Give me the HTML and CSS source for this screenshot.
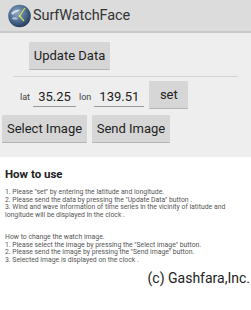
FILE: index.html
```html
<!DOCTYPE html>
<html>
<head>
<meta charset="utf-8">
<link rel="stylesheet" href="styles.css">
</head>
<body>
<div class="app">
  <header class="titlebar">
    <svg class="logo" width="23" height="24" viewBox="0 0 23 24">
      <defs>
        <radialGradient id="g" cx="0.4" cy="0.35" r="0.7">
          <stop offset="0" stop-color="#8fa9c4"/>
          <stop offset="0.55" stop-color="#4d6d92"/>
          <stop offset="1" stop-color="#1f3553"/>
        </radialGradient>
      </defs>
      <circle cx="11.5" cy="12" r="11.3" fill="url(#g)"/>
      <path d="M3 9 C6 6 9 5 12 6 C10 8 7 8 5 11 Z" fill="#dfe8ef" opacity="0.85"/>
      <path d="M4 14 C7 12 9 13 10 15 C8 16 6 16 4 15 Z" fill="#c9d7e3" opacity="0.7"/>
      <line x1="11.5" y1="12" x2="17" y2="4" stroke="#d8e04a" stroke-width="1.2"/>
      <line x1="11.5" y1="12" x2="16" y2="17" stroke="#d8e04a" stroke-width="1.2"/>
      <circle cx="11.5" cy="12" r="1" fill="#e6ec6a"/>
    </svg>
    <span class="title">SurfWatchFace</span>
  </header>

  <main class="controls">
    <div class="row center">
      <button class="btn btn-update">Update Data</button>
    </div>
    <div class="divider"></div>
    <div class="row latlon">
      <span class="label">lat</span>
      <span class="field f-lat">35.25</span>
      <span class="label">lon</span>
      <span class="field f-lon">139.51</span>
      <button class="btn btn-set">set</button>
    </div>
    <div class="row images">
      <button class="btn btn-select">Select Image</button>
      <button class="btn btn-send">Send Image</button>
    </div>
  </main>

  <section class="help">
    <h2 class="help-title">How to use</h2>
    <p class="help-text">1. Please "set" by entering the latitude and longitude.<br>2. Please send the data by pressing the "Update Data" button .<br>3. Wind and wave information of time series in the vicinity of latitude and longitude will be displayed in the clock .</p>
    <p class="help-text gap">How to change the watch image.<br>1. Please select the image by pressing the "Select image" button.<br>2. Please send the image by pressing the "Send image" button.<br>3. Selected image is displayed on the clock .</p>
    <div class="copy">(c) Gashfara,Inc.</div>
  </section>
</div>
</body>
</html>
```

FILE: styles.css
```css
html, body {
  margin: 0;
  padding: 0;
}
body {
  width: 251px;
  height: 310px;
  overflow: hidden;
  background: #eeeeee;
  font-family: Roboto, "Liberation Sans", sans-serif;
  color: #222;
}
.app {
  display: flex;
  flex-direction: column;
  height: 310px;
}
.titlebar {
  height: 31px;
  background: #dcdcdc;
  border-bottom: 2px solid #c9c9c9;
  display: flex;
  align-items: center;
  padding-left: 8px;
  gap: 2px;
  flex-shrink: 0;
}
.logo {
  display: block;
  margin-top: 1px;
}
.title {
  font-size: 14.5px;
  color: #333;
  letter-spacing: -0.1px;
}
.controls {
  display: flex;
  flex-direction: column;
  padding-top: 9px;
}
.row {
  display: flex;
  align-items: center;
}
.center {
  padding-left: 29px;
}
.btn {
  font-family: Roboto, "Liberation Sans", sans-serif;
  font-size: 13px;
  color: #222;
  background: #d6d6d6;
  border: none;
  border-bottom: 1px solid #b4b4b4;
  border-radius: 1px;
  padding: 0;
  height: 28px;
  display: flex;
  align-items: center;
  justify-content: center;
}
.btn-update {
  width: 81px;
}
.divider {
  height: 1px;
  background: #d2d2d2;
  margin: 6px 13px 0 13px;
}
.latlon {
  margin-top: 4px;
  height: 28px;
}
.label {
  font-size: 9px;
  color: #444;
  margin-top: 3px;
}
.latlon .label:first-child {
  margin-left: 20px;
}
.field {
  font-size: 13px;
  color: #222;
  border-bottom: 1px solid #9a9a9a;
  height: 20px;
  line-height: 20px;
  margin-top: 3px;
  box-sizing: border-box;
  text-align: center;
}
.f-lat {
  width: 43px;
  margin-left: 3px;
  margin-right: 3px;
}
.f-lon {
  width: 50px;
  margin-left: 3px;
}
.btn-set {
  width: 39px;
  margin-left: 5px;
}
.images {
  margin-top: 6px;
  padding-left: 2px;
  gap: 5px;
}
.btn-select {
  width: 85px;
}
.btn-send {
  width: 78px;
}
.help {
  margin-top: 14px;
  background: #ffffff;
  flex: 1;
  padding: 10px 0 0 5px;
}
.help-title {
  margin: 0;
  font-size: 11.5px;
  font-weight: bold;
  color: #222;
  line-height: 14px;
}
.help-text {
  margin: 8px 0 0 0;
  font-size: 6.85px;
  line-height: 7.7px;
  color: #555;
  width: 242px;
}
.help-text.gap {
  margin-top: 14px;
}
.copy {
  text-align: right;
  font-size: 14px;
  line-height: 16px;
  color: #222;
  margin-top: 5px;
  padding-right: 1px;
}
```
